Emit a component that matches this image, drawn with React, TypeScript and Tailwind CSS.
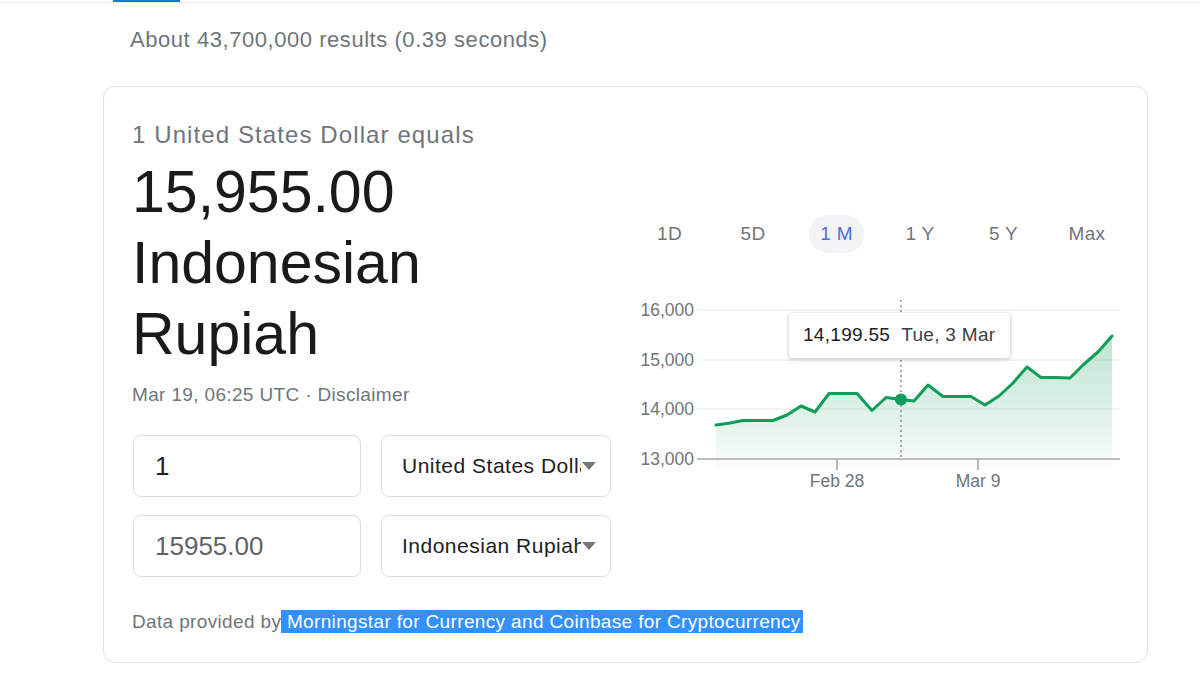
import React from "react";

const points: [number, number][] = [
  [716, 425], [730, 423], [743, 420.5], [760, 420.5], [773, 420.5], [787, 415],
  [801, 406], [815, 412], [829, 393.5], [843, 393.5], [857, 393.5], [872, 410.5],
  [886, 397.5], [901, 399.5], [914, 401], [928, 385], [943, 396.5], [957, 396.5],
  [971, 396.5], [985, 405], [999, 396], [1013, 383], [1027, 367], [1041, 377.5],
  [1055, 377.5], [1070, 378], [1083, 365], [1098, 352], [1112, 336],
];

const tabs = ["1D", "5D", "1 M", "1 Y", "5 Y", "Max"];

const Chart = () => {
  const line = points.map(([x, y], i) => `${i === 0 ? "M" : "L"}${x} ${y}`).join(" ");
  const area = `${line} L1112 466 L716 466 Z`;

  return (
    <div className="relative w-[500px] h-[200px]">
      <svg width="500" height="200" viewBox="630 295 500 200">
        <defs>
          <linearGradient id="fill" x1="0" y1="335" x2="0" y2="466" gradientUnits="userSpaceOnUse">
            <stop offset="0" stopColor="#0f9d58" stopOpacity="0.28" />
            <stop offset="1" stopColor="#0f9d58" stopOpacity="0.03" />
          </linearGradient>
        </defs>

        {/* grid */}
        {[310, 360, 409].map((y) => (
          <line key={y} x1="697" x2="1120" y1={y} y2={y} stroke="#f1f1f1" strokeWidth="1.5" />
        ))}
        <path d={area} fill="url(#fill)" />
        <line x1="697" x2="1120" y1="459" y2="459" stroke="#bdbdbd" strokeWidth="2" />
        <line x1="837" x2="837" y1="459" y2="470" stroke="#a0a0a0" strokeWidth="1.5" />
        <line x1="978" x2="978" y1="459" y2="470" stroke="#a0a0a0" strokeWidth="1.5" />

        {/* y labels */}
        {[
          ["16,000", 310],
          ["15,000", 360],
          ["14,000", 409],
          ["13,000", 459],
        ].map(([t, y]) => (
          <text
            key={t}
            x="694"
            y={Number(y) + 6}
            textAnchor="end"
            fontSize="17.5"
            fill="#70757a"
            fontFamily="'Liberation Sans', Arial, sans-serif"
          >
            {t}
          </text>
        ))}
        <text x="837" y="487" textAnchor="middle" fontSize="17.5" fill="#70757a" fontFamily="'Liberation Sans', Arial, sans-serif">
          Feb 28
        </text>
        <text x="978" y="487" textAnchor="middle" fontSize="17.5" fill="#70757a" fontFamily="'Liberation Sans', Arial, sans-serif">
          Mar 9
        </text>

        {/* hover marker */}
        <line x1="901" x2="901" y1="300" y2="459" stroke="#777" strokeWidth="1.2" strokeDasharray="2 3" />
        <path d={line} fill="none" stroke="#0f9d58" strokeWidth="3" strokeLinejoin="round" strokeLinecap="round" />
        <circle cx="901" cy="399.5" r="6" fill="#0f9d58" />
      </svg>

      {/* tooltip */}
      <div className="absolute left-[159px] top-[18px] w-[221px] h-[45px] bg-white rounded-[4px] shadow-[0_1px_4px_rgba(0,0,0,0.25)] flex items-center pl-[14px] text-[19px] tracking-[0.3px] whitespace-nowrap">
        <span className="text-[#202124]">14,199.55</span>
        <span className="ml-[11px] text-[#3c4043]">Tue, 3 Mar</span>
      </div>
    </div>
  );
};

const Field = ({ value, dark }: { value: string; dark?: boolean }) => (
  <div
    className={`w-[228px] h-[62px] border border-[#dadce0] rounded-[8px] flex items-center pl-[21px] text-[26px] ${
      dark ? "text-[#202124]" : "text-[#5f6368]"
    }`}
  >
    {value}
  </div>
);

const Select = ({ label }: { label: string }) => (
  <div className="w-[230px] h-[62px] border border-[#dadce0] rounded-[8px] flex items-center pl-[20px]">
    <div className="w-[179px] overflow-hidden whitespace-nowrap text-[21px] tracking-[0.5px] text-[#202124]">{label}</div>
    <div className="ml-[1px] w-0 h-0 border-l-[7.5px] border-r-[7.5px] border-t-[8px] border-l-transparent border-r-transparent border-t-[#777]" />
  </div>
);

export default function App() {
  return (
    <div className="w-[1200px] h-[675px] bg-white overflow-hidden font-['Liberation_Sans',Arial,sans-serif]">
      {/* top tab bar edge */}
      <div className="h-[3px] border-b border-[#ebebeb]">
        <div className="ml-[113px] w-[67px] h-[2px] bg-[#1a73e8]" />
      </div>

      <div className="mt-[23px] pl-[130px] text-[22px] leading-[28px] tracking-[0.55px] text-[#70757a]">
        About 43,700,000 results (0.39 seconds)
      </div>

      {/* currency card */}
      <div className="ml-[103px] mt-[32px] w-[1045px] h-[577px] border border-[#dfe1e5] rounded-[12px] flex">
        <div className="w-[526px] pl-[28px] pt-[33px]">
          <div className="text-[24px] leading-[30px] tracking-[1.1px] text-[#70757a]">1 United States Dollar equals</div>
          <div className="mt-[7px] text-[59px] leading-[71px] text-[#1a1a1a]">
            <div>15,955.00</div>
            <div>Indonesian</div>
            <div>Rupiah</div>
          </div>
          <div className="mt-[13px] text-[19px] leading-[24px] tracking-[0.35px] text-[#70757a]">Mar 19, 06:25 UTC · Disclaimer</div>

          <div className="mt-[28px] ml-[1px] flex flex-col gap-[18px]">
            <div className="flex gap-[20px]">
              <Field value="1" dark />
              <Select label="United States Dollar" />
            </div>
            <div className="flex gap-[20px]">
              <Field value="15955.00" />
              <Select label="Indonesian Rupiah" />
            </div>
          </div>

          <div className="mt-[33px] text-[19px] leading-[24px] tracking-[0.35px] text-[#70757a] whitespace-nowrap">
            Data provided by
            <span className="bg-[#3390ff] text-white pr-[2px] py-[1px]">
              {" "}Morningstar for Currency and Coinbase for Cryptocurrency
            </span>
          </div>
        </div>

        <div className="flex-1 pt-[128px]">
          <div className="ml-[12px] flex gap-[28.5px]">
            {tabs.map((t) => (
              <div
                key={t}
                className={`w-[55px] h-[38px] rounded-full flex items-center justify-center text-[19px] tracking-[0.3px] ${
                  t === "1 M" ? "bg-[#f1f3f4] text-[#4a6ee0]" : "text-[#70757a]"
                }`}
              >
                {t}
              </div>
            ))}
          </div>
          <div className="mt-[42px]">
            <Chart />
          </div>
        </div>
      </div>
    </div>
  );
}
